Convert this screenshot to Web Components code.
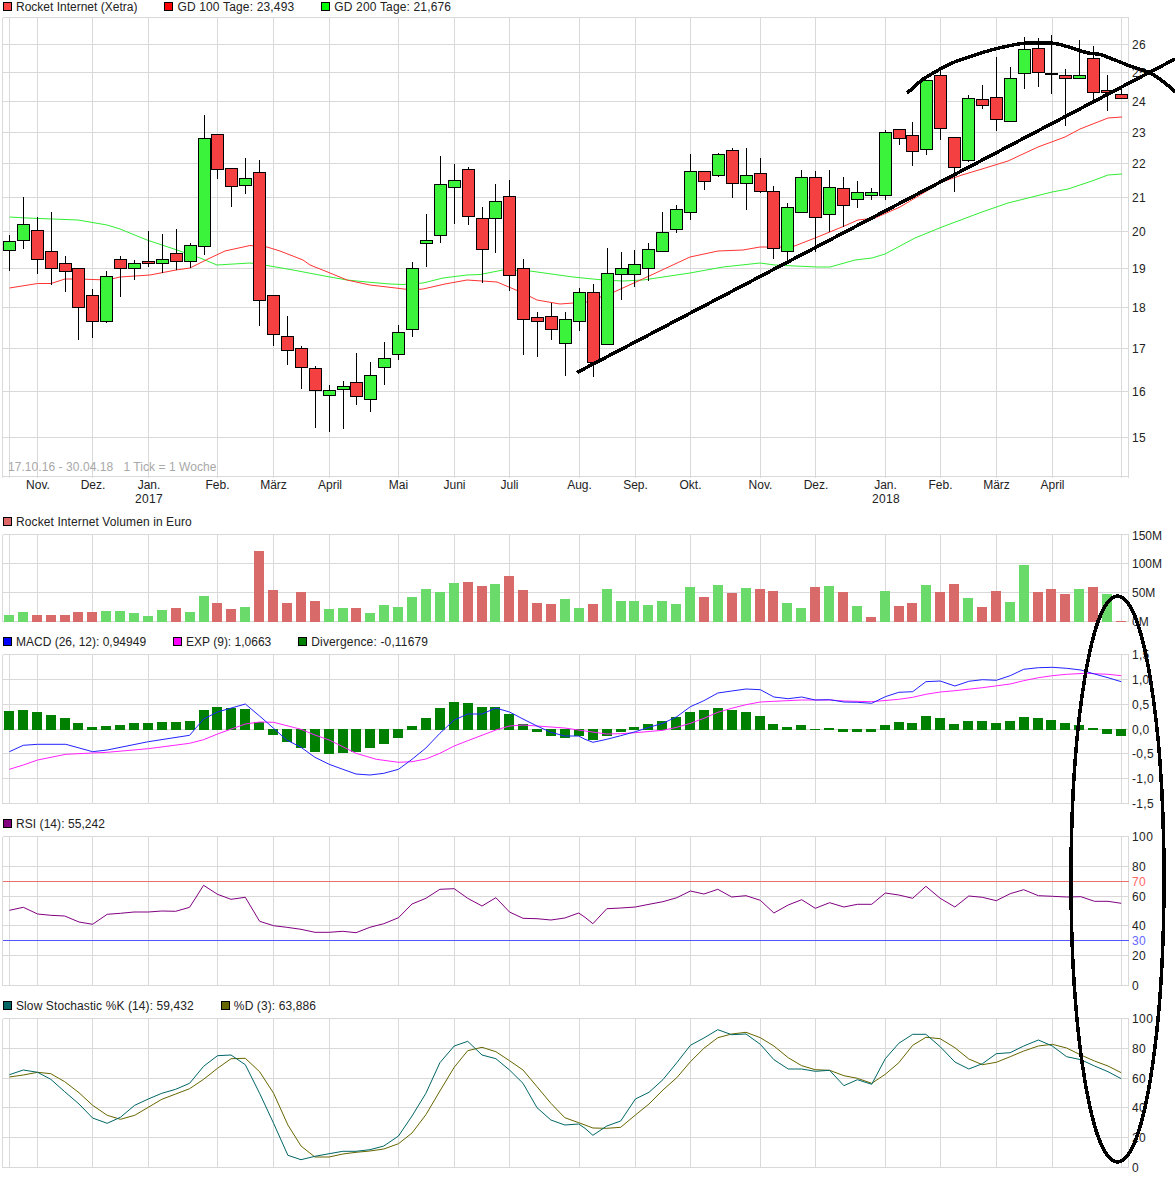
<!DOCTYPE html>
<html lang="de">
<head>
<meta charset="utf-8">
<title>Rocket Internet Chart</title>
<style>
html,body{margin:0;padding:0;background:#fff}
</style>
</head>
<body>
<chart-page>
  <chart-pane kind="price" top="17" bottom="513" first>
    <legend-item slot="legend" color="#f44">Rocket Internet (Xetra)</legend-item>
    <legend-item slot="legend" color="#f00" track=".16">GD 100 Tage: 23,493</legend-item>
    <legend-item slot="legend" color="#0f0" track=".16">GD 200 Tage: 21,676</legend-item>
  </chart-pane>
  <chart-pane kind="volume" top="533" bottom="633">
    <legend-item slot="legend" color="#d66" track=".1">Rocket Internet Volumen in Euro</legend-item>
  </chart-pane>
  <chart-pane kind="macd" top="653" bottom="815">
    <legend-item slot="legend" color="#00f">MACD (26, 12): 0,94949</legend-item>
    <legend-item slot="legend" color="#f0f">EXP (9): 1,0663</legend-item>
    <legend-item slot="legend" color="#008000" track=".15">Divergence: -0,11679</legend-item>
  </chart-pane>
  <chart-pane kind="rsi" top="835" bottom="997">
    <legend-item slot="legend" color="#800080" track=".06">RSI (14): 55,242</legend-item>
  </chart-pane>
  <chart-pane kind="stoch" top="1017" bottom="1179">
    <legend-item slot="legend" color="#006666" track=".1">Slow Stochastic %K (14): 59,432</legend-item>
    <legend-item slot="legend" color="#666600" track=".1">%D (3): 63,886</legend-item>
  </chart-pane>
  <chart-annotations></chart-annotations>
</chart-page>
<script>
const FONT='"Liberation Sans",Arial,sans-serif';
const GRIDX=[9.5,37.5,92.5,148.5,217.5,273.5,329.5,398.5,454.5,509.5,579.5,635.5,690.5,760.5,815.5,885.5,940.5,996.5,1052.5,1121.5];
const LEFT=2.5,RIGHT=1128.5;
const X=i=>Math.floor(9.4+13.9*i)+.5;
const SX=2.6576;

const CANDLES=[
[235,241,250,271,'g'],[197,224,240,249,'g'],[217,230,259,274,'r'],[212,251,268,285,'r'],[256,263,271,292,'r'],
[268,268,307,340,'r'],[289,295,321,338,'r'],[271,276,321,323,'g'],[256,259,268,297,'r'],[260,263,268,280,'g'],
[231,261,263,267,'r'],[234,259,263,273,'g'],[229,253,261,270,'r'],[243,245,261,268,'g'],[115,138,246,255,'g'],
[134,134,169,179,'r'],[168,168,186,207,'r'],[158,178,185,194,'g'],[160,172,300,326,'r'],[295,295,334,346,'r'],
[316,336,350,365,'r'],[346,348,367,389,'r'],[366,368,390,428,'r'],[385,390,395,432,'g'],[381,386,389,429,'g'],
[353,382,396,405,'r'],[362,375,399,412,'g'],[342,358,367,385,'g'],[325,332,354,360,'g'],[262,268,329,337,'g'],
[214,240,243,267,'g'],[156,184,235,243,'g'],[164,180,187,224,'g'],[167,169,216,225,'r'],[207,218,249,283,'r'],
[184,201,218,253,'g'],[180,196,275,291,'r'],[259,268,319,355,'r'],[312,317,321,357,'r'],[303,316,329,340,'r'],
[312,319,343,376,'g'],[288,292,321,331,'g'],[284,292,362,377,'r'],[248,273,344,344,'g'],[252,268,274,300,'g'],
[250,264,274,287,'g'],[243,249,268,281,'g'],[212,232,251,251,'g'],[205,209,229,233,'g'],[154,171,212,220,'g'],
[171,171,181,190,'r'],[153,154,175,177,'g'],[148,150,183,198,'r'],[148,175,183,210,'g'],[158,173,191,193,'r'],
[186,191,248,259,'r'],[203,207,251,262,'g'],[170,177,212,212,'g'],[171,177,217,252,'r'],[170,187,214,232,'g'],
[177,188,205,227,'r'],[181,192,199,208,'g'],[188,192,195,200,'g'],[130,132,195,200,'g'],[129,129,138,145,'r'],
[122,135,151,166,'r'],[80,80,149,155,'g'],[68,75,128,140,'r'],[137,137,167,192,'r'],[95,98,160,162,'g'],
[85,99,105,109,'r'],[57,97,119,131,'r'],[67,78,121,122,'g'],[37,49,73,89,'g'],[38,48,72,87,'r'],
[35,73,74,94,'r'],[69,75,78,126,'r'],[40,75,78,78,'g'],[46,58,92,103,'r'],[75,90,92,111,'r'],[88,94,98,98,'r']];

const MA100=[[9.5,288],[37.5,283.5],[51,283.5],[65,279],[79,279],[107,280],[120,277],[150,275],[176,270],[190,268],[208,259],[225,251],[250,245.5],[267,247],[280,251],[303,260],[310,265],[330,273],[347,280],[370,285],[400,288.5],[412,290],[423,289],[445,284],[467,280],[497,282],[523,293],[537,300],[560,304],[587,302],[614,292],[647,277],[690,257],[718,251],[743,250],[760,247],[792,247],[815,238],[842,227],[858,220],[875,218],[900,207],[920,195],[942,182],[962,175],[982,169],[1008,161],[1038,147],[1065,137],[1080,129],[1108,118],[1122,117]];
const MA200=[[9.5,217],[27,218],[78,220],[107,225],[120,229],[147,240],[177,250],[200,258],[217,265],[250,263],[270,266],[293,270],[330,277],[347,280],[367,282],[390,284],[403,284.5],[423,283],[443,278],[467,275],[480,274.5],[503,270],[530,271],[573,277],[603,280],[623,281],[643,280],[690,273],[723,267],[760,263],[775,265],[795,266],[818,267],[830,267],[855,260],[872,258],[885,254],[915,238],[942,227],[982,212],[1008,203],[1028,198],[1052,192],[1068,189],[1092,181],[1108,175],[1122,174]];

const VOLUME=[[315,'g'],[306,'g'],[315,'r'],[315,'r'],[315,'r'],[306,'r'],[306,'r'],[303,'g'],[303,'g'],[309,'g'],[318,'g'],[300,'g'],[294,'r'],[306,'g'],[258,'g'],[279,'r'],[297,'r'],[291,'g'],[123,'r'],[240,'r'],[279,'r'],[246,'r'],[273,'r'],[297,'g'],[294,'g'],[294,'r'],[309,'g'],[285,'g'],[291,'g'],[261,'g'],[237,'g'],[246,'g'],[219,'g'],[216,'r'],[228,'r'],[222,'g'],[198,'r'],[240,'r'],[279,'r'],[282,'r'],[267,'g'],[294,'g'],[282,'r'],[237,'g'],[273,'g'],[273,'g'],[285,'g'],[273,'g'],[282,'g'],[231,'g'],[261,'r'],[225,'g'],[249,'r'],[234,'g'],[237,'r'],[243,'r'],[279,'g'],[294,'g'],[231,'r'],[228,'g'],[246,'r'],[288,'g'],[321,'r'],[243,'g'],[288,'r'],[279,'r'],[225,'g'],[246,'r'],[222,'r'],[264,'g'],[291,'r'],[243,'r'],[276,'g'],[165,'g'],[246,'r'],[237,'r'],[252,'r'],[237,'g'],[231,'r'],[252,'g'],[333,'r']];

// Divergence: values in 3x crop rows; above the zero row = positive bar, below = negative bar
const DIV=[603,600,606,615,624,639,651,648,645,639,639,636,636,633,600,591,594,597,636,672,693,711,723,729,726,723,711,699,681,648,624,594,576,579,591,591,612,642,663,675,681,675,687,675,663,651,642,633,621,606,600,594,600,606,618,642,651,645,659,654,663,663,663,645,636,639,618,624,642,633,633,639,633,621,624,630,639,645,655,669,675];

const sp=(l,r,yb)=>l.map(p=>[p[0]/SX,yb+p[1]/3]).concat(r.map(p=>[p[0]/SX+585,yb+p[1]/3]));
const MACD=sp([[25,725],[62,706],[100,703],[175,703],[246,725],[285,720],[394,695],[504,676],[541,627],[578,606],[652,582],[690,618],[727,655],[762,690],[800,712],[837,742],[875,763],[911,778],[946,792],[983,795],[1020,790],[1059,778],[1095,748],[1132,714],[1169,670],[1207,630],[1243,612],[1281,612],[1318,594],[1354,606],[1390,627],[1427,648],[1464,667],[1501,678],[1538,678]],
[[0,688],[21,697],[58,688],[95,677],[134,665],[170,652],[207,640],[244,620],[280,590],[316,572],[353,549],[390,543],[428,537],[466,539],[502,561],[540,566],[576,561],[612,570],[650,569],[688,576],[724,577],[762,580],[798,560],[834,547],[871,545],[906,515],[944,513],[983,528],[1020,514],[1056,509],[1093,511],[1130,497],[1166,478],[1205,473],[1242,472],[1280,475],[1318,480],[1354,492],[1390,503],[1425,515]],510);
const EXP=sp([[25,778],[62,765],[100,750],[175,733],[246,729],[285,727],[394,716],[504,700],[541,689],[578,672],[652,642],[690,636],[727,637],[800,658],[837,675],[875,690],[946,730],[1000,748],[1059,757],[1095,755],[1132,747],[1169,730],[1207,708],[1243,692],[1318,660],[1354,648],[1390,645],[1427,648],[1501,654]],
[[0,663],[58,672],[95,671],[134,668],[207,661],[244,652],[280,640],[316,625],[353,607],[390,595],[428,584],[466,576],[502,574],[576,570],[650,570],[690,573],[762,575],[834,568],[871,562],[906,553],[944,546],[983,542],[1056,533],[1130,522],[1166,512],[1205,503],[1242,497],[1280,493],[1330,490],[1390,493],[1425,497]],510);
const RSI=sp([[25,301],[62,292],[100,312],[135,316],[172,318],[210,336],[246,343],[285,313],[320,310],[356,306],[394,306],[430,303],[467,304],[504,292],[541,226],[578,253],[614,268],[652,262],[690,334],[727,347],[762,352],[800,358],[837,367],[875,367],[911,364],[946,368],[983,352],[1020,341],[1059,323],[1095,282],[1132,265],[1169,238],[1207,236],[1243,265],[1281,288],[1318,263],[1354,306],[1390,325],[1427,326],[1464,330],[1501,324],[1538,309]],
[[0,322],[21,341],[58,296],[95,294],[134,291],[170,283],[207,275],[244,263],[280,243],[316,252],[353,238],[390,261],[428,257],[466,271],[502,309],[540,285],[576,269],[612,295],[650,278],[688,291],[724,283],[762,283],[798,249],[834,255],[871,265],[906,229],[944,265],[983,291],[1020,258],[1056,262],[1093,272],[1130,251],[1166,239],[1205,257],[1242,259],[1280,261],[1318,260],[1354,274],[1390,274],[1425,280]],810);
const STK=sp([[25,794],[62,780],[100,787],[135,808],[172,845],[210,882],[246,924],[285,940],[320,922],[358,886],[394,867],[430,850],[467,838],[504,820],[541,769],[578,737],[614,735],[652,764],[690,850],[727,940],[765,1036],[800,1049],[837,1039],[875,1031],[911,1024],[946,1024],[983,1019],[1020,1008],[1059,978],[1095,918],[1132,850],[1169,758],[1207,708],[1243,694],[1281,735],[1318,746],[1354,780],[1390,820],[1427,893],[1464,930],[1501,945],[1538,942]],
[[0,955],[21,976],[58,948],[95,933],[134,867],[170,847],[207,809],[244,758],[280,706],[316,684],[353,659],[390,674],[428,672],[466,703],[502,749],[540,777],[576,777],[612,784],[650,781],[688,827],[724,809],[762,823],[798,746],[834,700],[871,673],[906,673],[944,710],[983,756],[1020,777],[1056,761],[1093,731],[1130,728],[1166,708],[1205,690],[1242,708],[1280,740],[1318,749],[1354,768],[1390,785],[1425,806]],810);
const STD=sp([[25,801],[62,795],[100,787],[135,791],[172,815],[210,848],[246,886],[285,916],[320,928],[358,916],[394,892],[430,868],[467,852],[504,836],[541,808],[578,775],[614,746],[652,745],[690,785],[727,850],[765,945],[800,1008],[837,1041],[875,1041],[911,1032],[946,1027],[983,1023],[1020,1017],[1059,1001],[1095,969],[1132,914],[1169,843],[1207,772],[1243,722],[1281,712],[1318,725],[1354,752],[1390,780],[1427,830],[1464,880],[1501,923],[1538,938]],
[[0,945],[21,954],[58,955],[95,952],[134,915],[170,882],[207,840],[244,803],[280,755],[316,715],[353,683],[390,672],[428,667],[466,683],[502,708],[540,743],[576,767],[612,779],[650,781],[688,797],[724,805],[762,820],[798,793],[834,758],[871,706],[906,682],[944,686],[983,713],[1020,747],[1056,764],[1093,757],[1130,740],[1166,723],[1205,708],[1242,703],[1280,714],[1318,735],[1354,753],[1390,768],[1425,788]],810);

const pts=a=>a.map(p=>p[0].toFixed(1)+','+p[1].toFixed(1)).join(' ');
const line=(a,c,w=1)=>`<polyline points="${pts(a)}" fill="none" stroke="${c}" stroke-width="${w}" stroke-linejoin="round"/>`;
const smooth=a=>{
  let d=`M${a[0][0]} ${a[0][1]}`;
  for(let i=0;i<a.length-1;i++){
    const p0=a[i-1]||a[i],p1=a[i],p2=a[i+1],p3=a[i+2]||p2;
    d+=`C${(p1[0]+(p2[0]-p0[0])/6).toFixed(1)} ${(p1[1]+(p2[1]-p0[1])/6).toFixed(1)} ${(p2[0]-(p3[0]-p1[0])/6).toFixed(1)} ${(p2[1]-(p3[1]-p1[1])/6).toFixed(1)} ${p2[0]} ${p2[1]}`;
  }
  return d;
};
const grid=(ys,ext=0)=>{
  const top=ys[0],bot=ys[ys.length-1];let s='<g stroke="#d9d9d9" stroke-width="1" shape-rendering="crispEdges">';
  ys.forEach(y=>s+=`<line x1="${LEFT}" x2="${RIGHT}" y1="${y}" y2="${y}"/>`);
  [LEFT,...GRIDX,RIGHT].forEach(x=>s+=`<line x1="${x}" x2="${x}" y1="${top}" y2="${bot+ext}"/>`);
  return s+'</g>';
};
const label=(x,y,t,c='#222',a='start',ls=0)=>`<text x="${x}" y="${y}" fill="${c}" text-anchor="${a}" letter-spacing="${ls}">${t}</text>`;
const axis=(a,ls=.4)=>a.map(([t,y,c])=>label(1132,y+5,t,c||'#222','start',ls)).join('');

const DRAW={
  price(){
    const ys=[17.5,44.5,72.5,101.5,132.5,163.5,197.5,231.5,268.5,307.5,348.5,391.5,437.5,476.5];
    let s=grid(ys,1.5);
    s+=label(8,471,'17.10.16 - 30.04.18 &#160; 1 Tick = 1 Woche','#a8a8a8','start',.06);
    s+=line(MA200,'#33ee33',1)+line(MA100,'#f33',1);
    s+='<g shape-rendering="crispEdges" stroke="#000" stroke-width="1">';
    CANDLES.forEach((c,i)=>{
      const x=X(i),[h,t,b,l,k]=c;
      s+=`<line x1="${x}" x2="${x}" y1="${h}" y2="${l}"/>`;
      s+=`<rect x="${x-6}" y="${t+.5}" width="12" height="${b-t}" fill="${k=='g'?'#3cf33c':'#f44040'}"/>`;
    });
    s+='</g>';
    [['26',44],['25',72],['24',101],['23',132],['22',163],['21',197],['20',231],['19',268],['18',307],['17',348],['16',391],['15',437]].forEach(([t,y])=>s+=label(1132,y+4.5,t,'#222','start',.4));
    [['Nov.',38],['Dez.',93],['Jan.',149],['Feb.',217.5],['März',273.5],['April',330],['Mai',398.5],['Juni',454.5],['Juli',509.5],['Aug.',579.5],['Sep.',635.5],['Okt.',690.5],['Nov.',760.5],['Dez.',816],['Jan.',885.5],['Feb.',940.5],['März',996.5],['April',1052.5]].forEach(([t,x])=>s+=label(x,489,t,'#222','middle'));
    s+=label(149,503,'2017','#222','middle',.3)+label(886,503,'2018','#222','middle',.3);
    return s;
  },
  volume(){
    let s=grid([534.5,563.5,592.5,621.5]);
    s+='<g shape-rendering="crispEdges">';
    VOLUME.forEach((v,i)=>{const y=510+v[0]/3;s+=`<rect x="${X(i)-5.5}" y="${y.toFixed(1)}" width="10" height="${(622-y).toFixed(1)}" fill="${v[1]=='g'?'#6ada6a':'#d86a6a'}"/>`;});
    s+='</g>';
    s+=axis([['150M',535],['100M',563],['50M',592],['0M',621]],0);
    return s;
  },
  macd(){
    let s=grid([654.5,679.5,704.5,729.5,753.5,778.5,803.5]);
    s+='<g shape-rendering="crispEdges" fill="#008000">';
    DIV.forEach((d,i)=>{
      const y=510+d/3;
      const top=d<657?y:729,bot=d<657?730:y+.5;
      s+=`<rect x="${X(i)-5.5}" y="${top.toFixed(1)}" width="10" height="${Math.max(bot-top,1).toFixed(1)}"/>`;
    });
    s+='</g>';
    s+=line(EXP,'#f2f',1)+line(MACD,'#22f',1);
    s+=axis([['1,5',654],['1,0',679],['0,5',704],['0,0',729],['-0,5',753],['-1,0',778],['-1,5',803]],.3);
    return s;
  },
  rsi(){
    let s=grid([836.5,866.5,896.5,925.5,955.5,985.5]);
    s+=`<g shape-rendering="crispEdges"><line x1="${LEFT}" x2="${RIGHT}" y1="881.5" y2="881.5" stroke="#e8706a"/><line x1="${LEFT}" x2="${RIGHT}" y1="940.5" y2="940.5" stroke="#5555ff"/></g>`;
    s+=line(RSI,'#800080',1);
    s+=axis([['100',836],['80',866],['70',881,'#f66'],['60',896],['40',925],['30',940,'#66f'],['20',955],['0',985]]);
    return s;
  },
  stoch(){
    let s=grid([1018.5,1048.5,1078.5,1107.5,1137.5,1167.5]);
    s+=line(STD,'#666600',1)+line(STK,'#006666',1);
    s+=axis([['100',1018],['80',1048],['60',1078],['40',1107],['20',1137],['0',1167]]);
    return s;
  }
};

class LegendItem extends HTMLElement{
  constructor(){
    super();
    this.attachShadow({mode:'open'}).innerHTML=`<style>
      :host{display:inline-flex;align-items:flex-start;gap:4px;white-space:nowrap;letter-spacing:var(--track,0)}
      i{display:block;width:9px;height:9px;box-sizing:border-box;border:1px solid #000;background:var(--c);margin-top:1px}
    </style><i part="swatch"></i><slot></slot>`;
  }
  connectedCallback(){
    this.shadowRoot.querySelector('i').style.setProperty('--c',this.getAttribute('color'));
    if(this.hasAttribute('track'))this.style.setProperty('--track',this.getAttribute('track')+'px');
  }
}
customElements.define('legend-item',LegendItem);

class ChartPane extends HTMLElement{
  constructor(){
    super();
    this.attachShadow({mode:'open'}).innerHTML=`<style>
      :host{display:block;font:12px/13px ${FONT};color:#222}
      .legend{display:flex;align-items:flex-start;gap:27px;height:20px;box-sizing:border-box;padding:3px 0 0 3px}
      :host([first]) .legend{height:17px;padding-top:1px}
      svg{display:block;overflow:visible;font:12px ${FONT}}
    </style><div class="legend"><slot name="legend"></slot></div><svg xmlns="http://www.w3.org/2000/svg"></svg>`;
  }
  connectedCallback(){
    const t=+this.getAttribute('top'),b=+this.getAttribute('bottom');
    const svg=this.shadowRoot.querySelector('svg');
    svg.setAttribute('width',1175);svg.setAttribute('height',b-t);
    svg.setAttribute('viewBox',`0 ${t} 1175 ${b-t}`);
    svg.innerHTML=DRAW[this.getAttribute('kind')]();
  }
}
customElements.define('chart-pane',ChartPane);

class ChartAnnotations extends HTMLElement{
  constructor(){
    super();
    const arc=[[907,93],[913,88],[922,80],[935,72],[952,63],[975,55],[995,49],[1022,43.5],[1040,43],[1055,43.5],[1072,48],[1088,53],[1100,54.5],[1115,60],[1130,66],[1150,73],[1165,83],[1175,92]];
    this.attachShadow({mode:'open'}).innerHTML=`<style>
      :host{position:absolute;inset:0;display:block;pointer-events:none}
      svg{display:block}
    </style><svg xmlns="http://www.w3.org/2000/svg" width="1175" height="1179" viewBox="0 0 1175 1179">
      <g fill="none" stroke="#000" stroke-width="3.5" shape-rendering="crispEdges">
        <line x1="577" y1="372.5" x2="1175" y2="59"/>
        <path d="${smooth(arc)}" stroke-linejoin="round"/>
        <ellipse cx="1117.5" cy="879" rx="46.5" ry="283"/>
      </g></svg>`;
  }
}
customElements.define('chart-annotations',ChartAnnotations);

class ChartPage extends HTMLElement{
  constructor(){
    super();
    this.attachShadow({mode:'open'}).innerHTML=`<style>
      :host{display:block;position:relative;width:1175px;height:1179px;overflow:hidden;background:#fff}
    </style><slot></slot>`;
  }
}
customElements.define('chart-page',ChartPage);
</script>
</body>
</html>
